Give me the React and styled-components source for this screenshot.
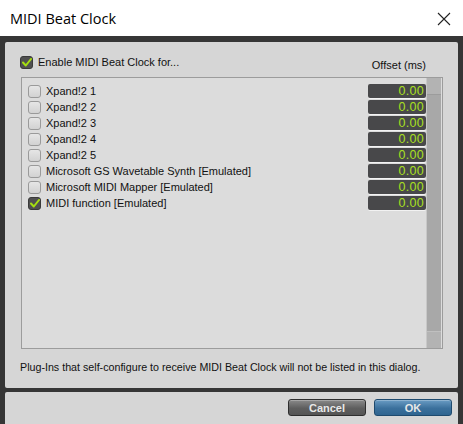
import React from 'react';
import styled, { createGlobalStyle } from 'styled-components';

const GlobalStyle = createGlobalStyle`
    html, body {
        margin: 0;
        padding: 0;
        background: #ffffff;
    }
    body {
        font-family: "Liberation Sans", Arial, sans-serif;
    }
`;

const devices = [
    { name: 'Xpand!2 1', checked: false },
    { name: 'Xpand!2 2', checked: false },
    { name: 'Xpand!2 3', checked: false },
    { name: 'Xpand!2 4', checked: false },
    { name: 'Xpand!2 5', checked: false },
    { name: 'Microsoft GS Wavetable Synth [Emulated]', checked: false },
    { name: 'Microsoft MIDI Mapper [Emulated]', checked: false },
    { name: 'MIDI function [Emulated]', checked: true },
];

const Check = ({ checked }) => (
    <Box checked={checked}>
        {checked &&
            <svg width="10" height="9" viewBox="0 0 10 9">
                <path d="M1 4.5 L3.8 7.5 L9 1" fill="none" stroke="#a6e010" strokeWidth="2" strokeLinecap="round" strokeLinejoin="round" />
            </svg>
        }
    </Box>
);

const App = () => {
    return (
        <Window>
            <GlobalStyle />
            <TitleBar>
                <Title>MIDI Beat Clock</Title>
                <svg width="14" height="14" viewBox="0 0 14 14">
                    <path d="M1 1 L13 13 M13 1 L1 13" stroke="#222" strokeWidth="1.1" />
                </svg>
            </TitleBar>
            <Frame>
                <Panel>
                    <Header>
                        <EnableLabel>
                            <Check checked />
                            Enable MIDI Beat Clock for...
                        </EnableLabel>
                        <OffsetTitle>Offset (ms)</OffsetTitle>
                    </Header>
                    <ListBox>
                        <Rows>
                            {devices.map(({ name, checked }) => (
                                <Row key={name}>
                                    <RowLabel>
                                        <Check checked={checked} />
                                        {name}
                                    </RowLabel>
                                    <Offset>0.00</Offset>
                                </Row>
                            ))}
                        </Rows>
                        <ScrollBar>
                            <Thumb />
                            <Track />
                            <Thumb />
                        </ScrollBar>
                    </ListBox>
                    <Note>Plug-Ins that self-configure to receive MIDI Beat Clock will not be listed in this dialog.</Note>
                </Panel>
                <ButtonPanel>
                    <Button>Cancel</Button>
                    <Button primary>OK</Button>
                </ButtonPanel>
            </Frame>
        </Window>
    );
};

const Window = styled.div`
    width: 463px;
    height: 424px;
    display: flex;
    flex-direction: column;
    overflow: hidden;
`;

const TitleBar = styled.div`
    height: 36px;
    display: flex;
    align-items: center;
    justify-content: space-between;
    padding: 0 12px 0 10px;
    background: #ffffff;
    svg {
        margin-top: 1px;
    }
`;

const Title = styled.div`
    font-family: "Open Sans", "Noto Sans", sans-serif;
    font-size: 14.5px;
    color: #000;
    margin-top: 1px;
`;

const Frame = styled.div`
    flex: 1;
    background: #363636;
    padding: 6px 5px 0 5px;
    display: flex;
    flex-direction: column;
    gap: 4px;
`;

const Panel = styled.div`
    height: 346px;
    box-sizing: border-box;
    background: #d6d6d6;
    border-radius: 2px;
    padding: 12px 15px 0 16px;
    display: flex;
    flex-direction: column;
`;

const Header = styled.div`
    display: flex;
    justify-content: space-between;
    align-items: center;
    height: 16px;
    margin-bottom: 7px;
`;

const EnableLabel = styled.div`
    display: flex;
    align-items: center;
    gap: 5px;
    font-size: 11px;
    color: #111;
    margin-left: -1px;
`;

const OffsetTitle = styled.div`
    font-size: 11px;
    color: #111;
    margin-top: 6px;
    margin-right: 17px;
`;

const Box = styled.span`
    box-sizing: border-box;
    width: 13px;
    height: 13px;
    border-radius: 3px;
    display: inline-flex;
    align-items: center;
    justify-content: center;
    flex: none;
    border: 1px solid ${({ checked }) => (checked ? '#3a3a3a' : '#9a9a9a')};
    background: ${({ checked }) => (checked ? '#505050' : 'linear-gradient(#e6e6e6, #d2d2d2)')};
`;

const ListBox = styled.div`
    height: 272px;
    box-sizing: border-box;
    border: 1px solid #9c9c9c;
    background: #dcdcdc;
    display: flex;
`;

const Rows = styled.div`
    flex: 1;
    padding: 5px 0 0 6px;
    display: flex;
    flex-direction: column;
`;

const Row = styled.div`
    display: flex;
    justify-content: space-between;
    align-items: center;
    height: 16px;
`;

const RowLabel = styled.div`
    display: flex;
    align-items: center;
    gap: 5px;
    font-size: 11px;
    color: #111;
`;

const Offset = styled.div`
    box-sizing: border-box;
    width: 58px;
    height: 14px;
    background: #48484a;
    border-radius: 2px;
    color: #a8e020;
    font-size: 12.5px;
    line-height: 14px;
    text-align: right;
    padding-right: 2px;
    letter-spacing: 0.3px;
    box-shadow: 0 1px 0 #f2f2f2;
`;

const ScrollBar = styled.div`
    width: 14px;
    margin-right: 1px;
    display: flex;
    flex-direction: column;
    background: #a9a9a9;
    border-left: 1px solid #c8c8c8;
`;

const Thumb = styled.div`
    height: 16px;
    background: #b3b3b3;
    border-bottom: 1px solid #9c9c9c;
    &:last-child {
        border-bottom: none;
        border-top: 1px solid #c0c0c0;
    }
`;

const Track = styled.div`
    flex: 1;
    background: #a8a8a8;
`;

const Note = styled.div`
    font-size: 10.7px;
    color: #111;
    margin-top: 12px;
    margin-left: -1px;
`;

const ButtonPanel = styled.div`
    flex: 1;
    background: #d6d6d6;
    border-radius: 2px 2px 0 0;
    display: flex;
    justify-content: flex-end;
    align-items: flex-start;
    gap: 8px;
    padding: 7px 6px 0 0;
`;

const Button = styled.button`
    width: 78px;
    height: 17px;
    padding: 0;
    border-radius: 3px;
    font-family: "Liberation Sans", Arial, sans-serif;
    font-size: 11px;
    font-weight: bold;
    color: #e8e8e8;
    border: 1px solid ${({ primary }) => (primary ? '#1e4a6e' : '#2e2e2e')};
    background: ${({ primary }) => (primary
        ? 'linear-gradient(#6a9cc4, #3b709c 55%, #2f6590)'
        : 'linear-gradient(#8a8a8a, #5e5e5e 55%, #555555)')};
    box-shadow: inset 0 1px 0 rgba(255, 255, 255, 0.25);
`;

export default App;
